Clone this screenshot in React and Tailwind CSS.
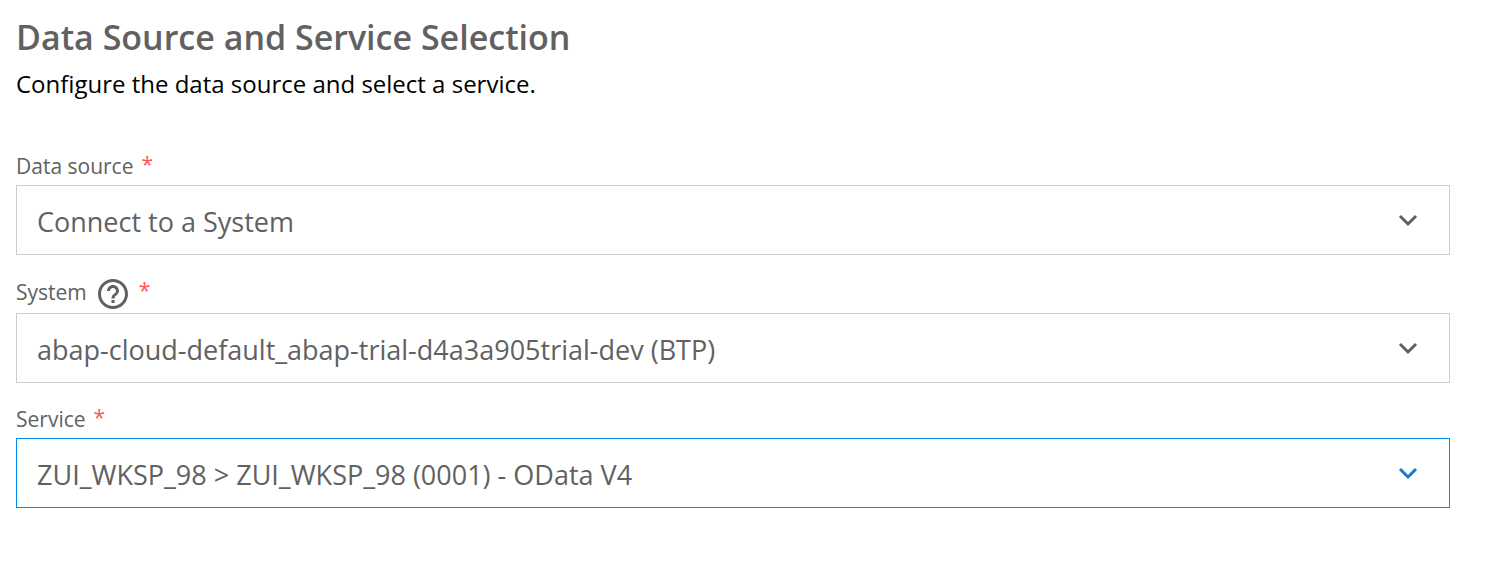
import React from "react";

function Chevron({ className }) {
  return (
    <svg
      className={`pointer-events-none h-5 w-5 ${className}`}
      viewBox="0 0 20 20"
      fill="none"
      stroke="currentColor"
      strokeWidth="3"
      aria-hidden="true"
    >
      <path d="M2 6l8 8 8-8" />
    </svg>
  );
}

function HelpIcon() {
  return (
    <svg viewBox="0 0 24 24" className="h-9 w-9" fill="currentColor" aria-hidden="true">
      <path d="M11 18h2v-2h-2v2zm1-16C6.480 2 2 6.480 2 12s4.480 10 10 10 10-4.480 10-10S17.520 2 12 2zm0 18c-4.410 0-8-3.590-8-8s3.590-8 8-8 8 3.590 8 8-3.590 8-8 8zm0-14c-2.210 0-4 1.790-4 4h2c0-1.100.900-2 2-2s2 .900 2 2c0 2-3 1.750-3 5h2c0-2.250 3-2.500 3-5 0-2.210-1.790-4-4-4z" />
    </svg>
  );
}

function Field({ id, label, value, help, active }) {
  return (
    <div>
      <div
        className={`flex items-center gap-2 text-[21px] leading-6 text-[#616161] ${
          help ? "h-[38px]" : "h-[35px]"
        }`}
      >
        <label htmlFor={id} className="pb-1">
          {label}
        </label>
        {help && (
          <button type="button" aria-label="Help">
            <HelpIcon />
          </button>
        )}
        <span className="pb-2 text-[#ff5555]">*</span>
      </div>
      <div className="relative">
        <select
          id={id}
          className={`block h-[70px] w-full appearance-none border bg-white px-5 pt-1 text-[27px] text-[#616161] outline-none ${
            active ? "border-[#0090f1]" : "border-[#cecece]"
          }`}
        >
          <option>{value}</option>
        </select>
        <Chevron
          className={`absolute right-8 top-[25px] ${active ? "text-[#1976d2]" : "text-[#616161]"}`}
        />
      </div>
    </div>
  );
}

export default function App() {
  return (
    <main className="bg-white pb-8 pl-4 pr-[38px] pt-[15px] font-['Open_Sans','Noto_Sans',sans-serif]">
      <h1 className="text-[34px] font-semibold leading-[44px] text-[#616161]">
        Data Source and Service Selection
      </h1>
      <p className="mt-[5px] text-[24px] leading-10 text-black">
        Configure the data source and select a service.
      </p>
      <form className="mt-[46px] flex flex-col gap-5">
        <Field id="source" label="Data source" value="Connect to a System" />
        <Field
          id="system"
          label="System"
          value="abap-cloud-default_abap-trial-d4a3a905trial-dev (BTP)"
          help
        />
        <Field id="service" label="Service" value="ZUI_WKSP_98 > ZUI_WKSP_98 (0001) - OData V4" active />
      </form>
    </main>
  );
}
